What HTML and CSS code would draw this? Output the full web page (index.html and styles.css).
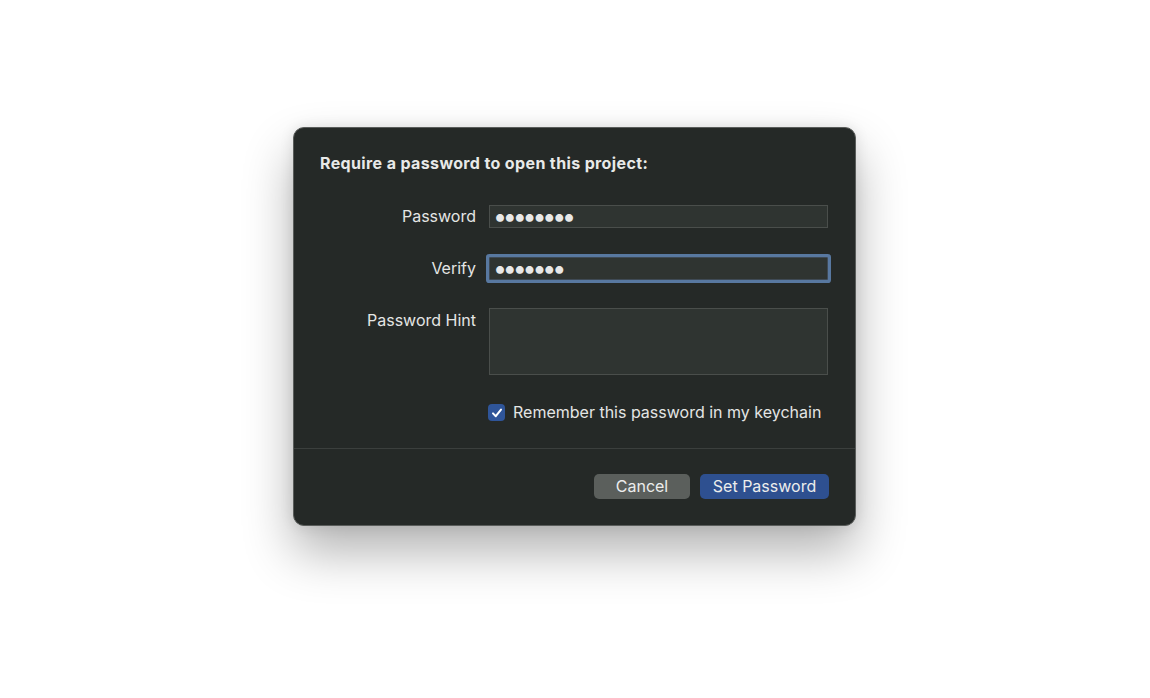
FILE: index.html
```html
<!DOCTYPE html>
<html lang="en">
<head>
<meta charset="utf-8">
<title>Set Password</title>
<link rel="stylesheet" href="styles.css">
</head>
<body>
<div class="page">
  <div class="dialog">
    <div class="content">
      <h1 class="title">Require a password to open this project:</h1>
      <div class="form">
        <label class="label">Password</label>
        <div class="field"><span class="dots">••••••••</span></div>
        <label class="label">Verify</label>
        <div class="field focused"><span class="dots">•••••••</span></div>
        <label class="label label-top">Password Hint</label>
        <div class="field area"></div>
        <div></div>
        <div class="check-row">
          <span class="checkbox">
            <svg width="12" height="12" viewBox="0 0 12 12"><path d="M2 6.4 L4.8 9.2 L10 2.6" fill="none" stroke="#fff" stroke-width="2" stroke-linecap="round" stroke-linejoin="round"/></svg>
          </span>
          <span class="check-text">Remember this password in my keychain</span>
        </div>
      </div>
    </div>
    <div class="footer">
      <button class="btn btn-cancel">Cancel</button>
      <button class="btn btn-primary">Set Password</button>
    </div>
  </div>
</div>
</body>
</html>
```
FILE: styles.css
```css
html, body {
  margin: 0;
  padding: 0;
  background: #ffffff;
}
body {
  font-family: Inter, "Noto Sans", "Liberation Sans", sans-serif;
  color: #e4e5e4;
  min-height: 698px;
}
.page {
  display: flex;
  justify-content: center;
  padding-top: 127px;
  min-height: 698px;
  box-sizing: border-box;
}
.dialog {
  width: 563px;
  height: 399px;
  box-sizing: border-box;
  background: #252927;
  border: 1px solid #5a5d5b;
  border-radius: 11px;
  box-shadow: 0 26px 50px rgba(0, 0, 0, 0.3), 0 0 14px rgba(0, 0, 0, 0.1);
  display: flex;
  flex-direction: column;
  margin-left: -1px;
}
.content {
  padding: 26px 26px 0 26px;
}
.title {
  margin: 0;
  font-size: 16px;
  line-height: 19px;
  font-weight: 700;
  color: #e8e9e8;
  letter-spacing: 0.37px;
}
.form {
  display: grid;
  grid-template-columns: 156px 339px;
  column-gap: 13px;
  row-gap: 29px;
  margin-top: 32px;
}
.label {
  font-size: 16px;
  line-height: 19px;
  text-align: right;
  align-self: center;
  color: #e4e5e4;
}
.label-top {
  align-self: start;
  padding-top: 2px;
}
.field {
  height: 23px;
  box-sizing: border-box;
  background: #2f3431;
  border: 1px solid #4a4e4b;
  display: flex;
  align-items: center;
  padding-left: 3px;
}
.field.focused {
  box-shadow: 0 0 0 3px #5878a0;
  border-radius: 1px;
  border-color: #3f4a55;
}
.field.area {
  height: 67px;
  margin-top: -1px;
}
.dots {
  font-size: 25px;
  letter-spacing: -4.2px;
  color: #e8e8e8;
  line-height: 21px;
  height: 21px;
}
.check-row {
  display: flex;
  align-items: center;
  margin-left: -1px;
  margin-top: -1px;
}
.checkbox {
  width: 17px;
  height: 17px;
  border-radius: 4px;
  background: #2f5599;
  display: flex;
  align-items: center;
  justify-content: center;
  margin-right: 8px;
}
.check-text {
  font-size: 16px;
  line-height: 19px;
  color: #e4e5e4;
}
.footer {
  margin-top: 26px;
  border-top: 1px solid #3b3f3d;
  display: flex;
  justify-content: flex-end;
  gap: 10px;
  padding: 25px 26px 0 0;
}
.btn {
  height: 25px;
  border: none;
  border-radius: 5px;
  font-family: Inter, "Noto Sans", "Liberation Sans", sans-serif;
  font-size: 16px;
  line-height: 19px;
  color: #ecedec;
  padding: 0 0 1px 0;
}
.btn-cancel {
  width: 96px;
  background: #5b5f5c;
}
.btn-primary {
  width: 129px;
  background: #2e5090;
}
```
